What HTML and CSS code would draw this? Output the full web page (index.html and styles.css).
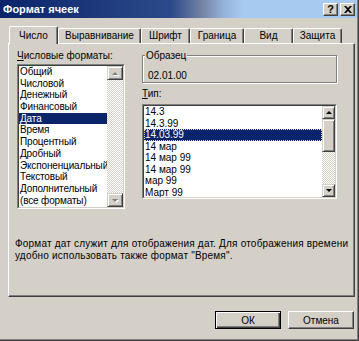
FILE: index.html
```html
<!DOCTYPE html>
<html>
<head>
<meta charset="utf-8">
<link rel="stylesheet" href="styles.css">
</head>
<body>
<div class="window">
  <div class="titlebar">
    <span class="title">Формат ячеек</span>
    <div class="tbtns">
      <div class="tbtn help">?</div>
      <div class="tbtn">
        <svg width="8" height="7" viewBox="0 0 8 7"><path d="M0 0h2l2 2 2-2h2L5 3.5 8 7H6L4 5 2 7H0l3-3.5z" fill="#000"/></svg>
      </div>
    </div>
  </div>
  <div class="content">
    <div class="tabs">
      <div class="tab active w49">Число</div>
      <div class="tab w83">Выравнивание</div>
      <div class="tab w49">Шрифт</div>
      <div class="tab w54">Граница</div>
      <div class="tab w49">Вид</div>
      <div class="tab w49">Защита</div>
    </div>
    <div class="panel">
      <div class="cols">
        <div class="col-left">
          <div class="label"><u>Ч</u>исловые форматы:</div>
          <div class="sunken list-left">
            <div class="sunken-in">
              <div class="items items-left">
                <div class="item">Общий</div>
                <div class="item">Числовой</div>
                <div class="item">Денежный</div>
                <div class="item">Финансовый</div>
                <div class="item sel">Дата</div>
                <div class="item">Время</div>
                <div class="item">Процентный</div>
                <div class="item">Дробный</div>
                <div class="item">Экспоненциальный</div>
                <div class="item">Текстовый</div>
                <div class="item">Дополнительный</div>
                <div class="item">(все форматы)</div>
              </div>
              <div class="vscroll wide">
                <div class="sbtn"><span class="arrow up dis"></span></div>
                <div class="track"></div>
                <div class="sbtn"><span class="arrow down dis"></span></div>
              </div>
            </div>
          </div>
        </div>
        <div class="col-right">
          <div class="group">
            <span class="group-label">Образец</span>
            <div class="sample">02.01.00</div>
          </div>
          <div class="label type-label"><u>Т</u>ип:</div>
          <div class="sunken list-right">
            <div class="sunken-in">
              <div class="items items-right">
                <div class="item">14.3</div>
                <div class="item">14.3.99</div>
                <div class="item sel focus">14.03.99</div>
                <div class="item">14 мар</div>
                <div class="item">14 мар 99</div>
                <div class="item">14 мар 99</div>
                <div class="item">мар 99</div>
                <div class="item">Март 99</div>
              </div>
              <div class="vscroll narrow">
                <div class="sbtn"><span class="arrow up"></span></div>
                <div class="thumb"></div>
                <div class="track"></div>
                <div class="sbtn"><span class="arrow down"></span></div>
              </div>
            </div>
          </div>
        </div>
      </div>
      <div class="desc">Формат дат служит для отображения дат. Для отображения времени<br>удобно использовать также формат "Время".</div>
    </div>
    <div class="buttons">
      <div class="btn default"><span>ОК</span></div>
      <div class="btn"><span>Отмена</span></div>
    </div>
  </div>
</div>
</body>
</html>
```

FILE: styles.css
```css
* { box-sizing: border-box; }
html, body { margin: 0; padding: 0; background: #d4d0c8; }
body {
  font-family: "Liberation Sans", Arial, sans-serif;
  font-size: 10px;
  color: #000;
}
.window {
  width: 359px;
  height: 341px;
  background: #d4d0c8;
  border-right: 1px solid #404040;
  border-bottom: 1px solid #404040;
  box-shadow: inset -1px -1px 0 #808080;
  display: flex;
  flex-direction: column;
}
.titlebar {
  height: 18px;
  margin-right: 1px;
  background: linear-gradient(to right, #0a246a 0%, #2c4a8a 48%, #6f7f9f 56%, #98b4dc 63%, #a6caf0 68%, #a6caf0 100%);
  display: flex;
  align-items: center;
  justify-content: space-between;
  padding: 0 2px 0 3px;
}
.title {
  color: #fff;
  font-weight: bold;
  font-size: 11px;
  line-height: 18px;
}
.tbtns { display: flex; gap: 2px; }
.tbtn {
  width: 15px;
  height: 13px;
  background: #d4d0c8;
  border-top: 1px solid #fff;
  border-left: 1px solid #fff;
  border-right: 1px solid #404040;
  border-bottom: 1px solid #404040;
  box-shadow: inset -1px -1px 0 #808080;
  display: flex;
  align-items: center;
  justify-content: center;
  font-weight: bold;
  font-size: 11px;
  line-height: 11px;
}
.content {
  flex: 1;
  padding: 8px 3px 0 8px;
  display: flex;
  flex-direction: column;
}
.tabs {
  display: flex;
  height: 17px;
  padding-left: 1px;
  align-items: flex-end;
}
.tab {
  height: 15px;
  border-top: 1px solid #fff;
  border-left: 1px solid #fff;
  border-right: 1px solid #404040;
  border-radius: 2px 2px 0 0;
  box-shadow: inset -1px 0 0 #808080;
  text-align: center;
  line-height: 14px;
  background: #d4d0c8;
}
.tab.active {
  height: 18px;
  margin-bottom: -1px;
  position: relative;
  z-index: 1;
  line-height: 18px;
}
.w49 { width: 49px; }
.w54 { width: 54px; }
.w83 { width: 83px; }
.panel {
  height: 254px;
  border-top: 1px solid #fff;
  border-left: 1px solid #fff;
  border-right: 1px solid #404040;
  border-bottom: 1px solid #404040;
  box-shadow: inset -1px -1px 0 #808080;
  padding: 5px 0 0 8px;
  display: flex;
  flex-direction: column;
}
.cols { display: flex; gap: 17px; }
.col-left { width: 108px; }
.col-right { width: 195px; display: flex; flex-direction: column; }
.label { line-height: 13px; height: 13px; margin-bottom: 2px; white-space: nowrap; }
.type-label { margin-top: 4px; margin-bottom: 4px; }
.sunken {
  border-top: 1px solid #808080;
  border-left: 1px solid #808080;
  border-right: 1px solid #fff;
  border-bottom: 1px solid #fff;
  background: #fff;
}
.sunken-in {
  height: 100%;
  border-top: 1px solid #404040;
  border-left: 1px solid #404040;
  border-right: 1px solid #d4d0c8;
  border-bottom: 1px solid #d4d0c8;
  display: flex;
  overflow: hidden;
}
.list-left { height: 145px; }
.list-right { height: 95px; }
.items { flex: 1; overflow: hidden; }
.item { padding-left: 1px; white-space: nowrap; overflow: hidden; }
.items-left .item { height: 11.7px; line-height: 12px; letter-spacing: -0.15px; }
.items-right .item { height: 11.5px; line-height: 12px; }
.item.sel { background: #0a246a; color: #fff; }
.item.focus { outline: 1px dotted #e8e0a0; outline-offset: -1px; }
.vscroll { display: flex; flex-direction: column; }
.vscroll.wide { width: 16px; }
.vscroll.narrow { width: 13px; }
.sbtn, .thumb {
  background: #d4d0c8;
  border-top: 1px solid #d4d0c8;
  border-left: 1px solid #d4d0c8;
  border-right: 1px solid #404040;
  border-bottom: 1px solid #404040;
  box-shadow: inset 1px 1px 0 #fff, inset -1px -1px 0 #808080;
  display: flex;
  align-items: center;
  justify-content: center;
}
.wide .sbtn { height: 14px; }
.narrow .sbtn { height: 13px; }
.thumb { height: 33px; }
.track {
  flex: 1;
  background: repeating-conic-gradient(#fff 0 25%, #d4d0c8 0 50%) 0 0 / 2px 2px;
}
.arrow { width: 0; height: 0; border-left: 3px solid transparent; border-right: 3px solid transparent; }
.arrow.up { border-bottom: 3px solid #000; }
.arrow.down { border-top: 3px solid #000; }
.arrow.up.dis { border-bottom-color: #808080; filter: drop-shadow(1px 1px 0 #fff); }
.arrow.down.dis { border-top-color: #808080; filter: drop-shadow(1px 1px 0 #fff); }
.group {
  margin-top: 6px;
  height: 28px;
  border: 1px solid #808080;
  box-shadow: inset 1px 1px 0 #fff, 1px 1px 0 #fff;
  padding-left: 5px;
}
.group-label {
  display: inline-block;
  margin-top: -7px;
  margin-left: -3px;
  padding: 0 1px;
  background: #d4d0c8;
  line-height: 13px;
  vertical-align: top;
}
.sample { line-height: 13px; margin-top: 2px; }
.desc {
  margin-top: 29px;
  margin-left: -2px;
  line-height: 12px;
  letter-spacing: 0.2px;
  white-space: nowrap;
}
.buttons {
  display: flex;
  justify-content: flex-end;
  gap: 7px;
  margin-top: 14px;
  padding-right: 1px;
}
.btn {
  width: 66px;
  height: 18px;
  border-top: 1px solid #fff;
  border-left: 1px solid #fff;
  border-right: 1px solid #404040;
  border-bottom: 1px solid #404040;
  box-shadow: inset -1px -1px 0 #808080;
  display: flex;
  align-items: center;
  justify-content: center;
  line-height: 13px;
}
.btn.default {
  border: 1px solid #000;
  box-shadow: inset 1px 1px 0 #fff, inset -1px -1px 0 #404040, inset -2px -2px 0 #808080;
}
```
